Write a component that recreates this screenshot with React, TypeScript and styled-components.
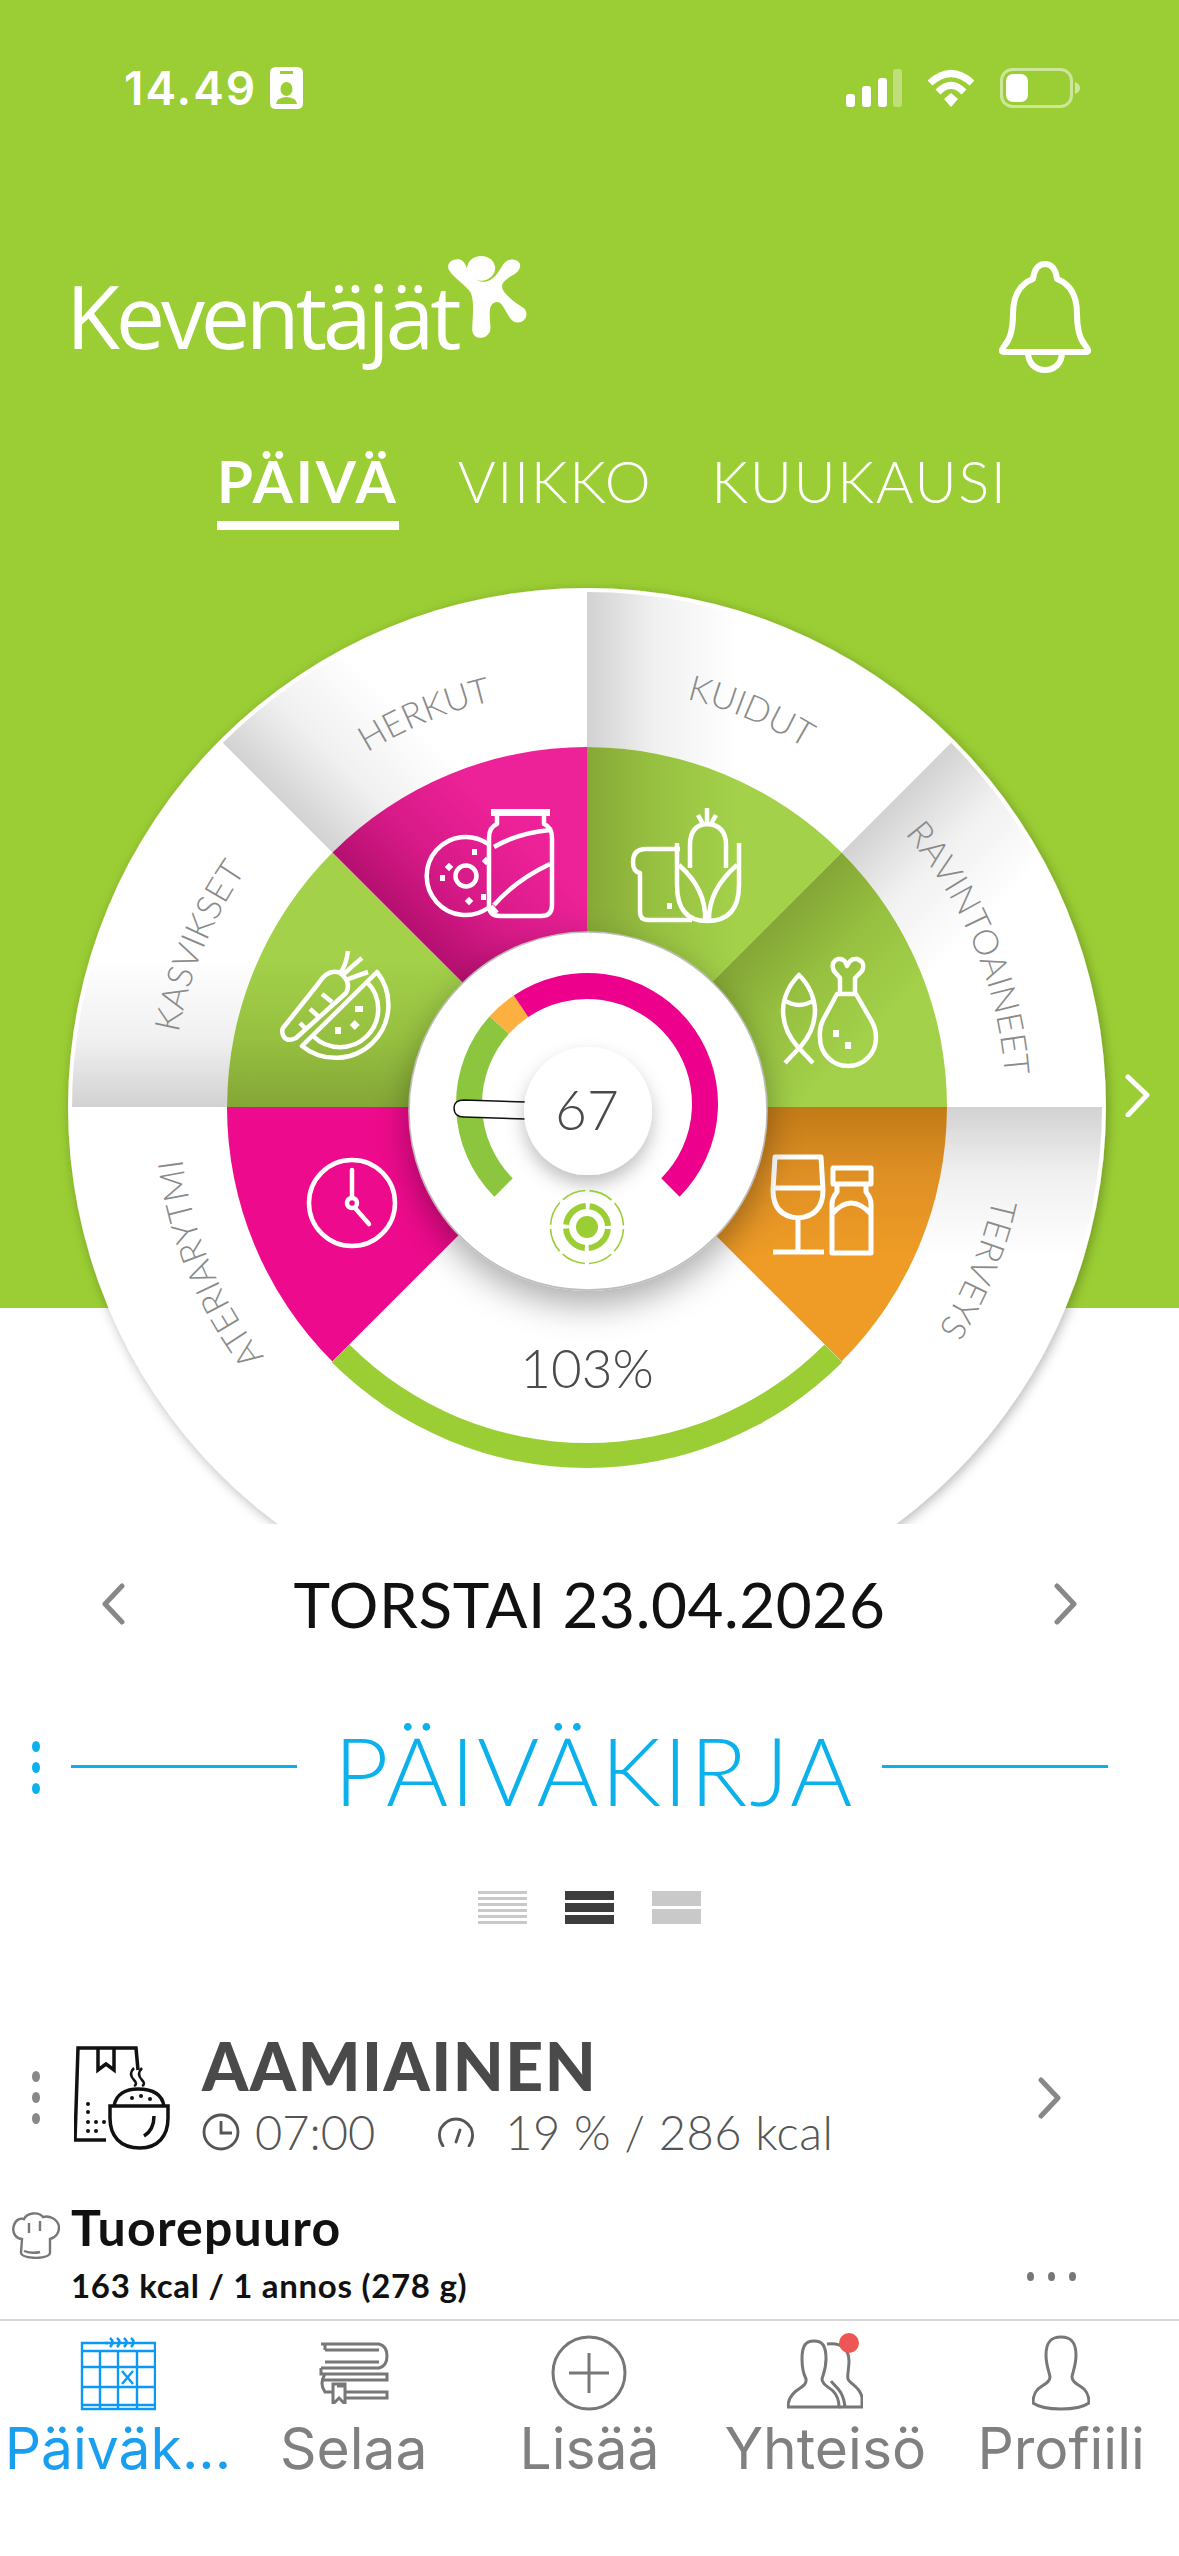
import React from "react";
import styled, { createGlobalStyle } from "styled-components";

const Global = createGlobalStyle`
  html, body { margin: 0; padding: 0; background: #fff; }
  * { box-sizing: border-box; }
  #root { width: 1179px; height: 2556px; }
`;

const GREEN = "#9bce34";
const BLUE = "#0cb1ec";
const CX = 587;
const CY = 1107;

const Page = styled.div`
  width: 1179px; height: 2556px; display: flex; flex-direction: column; overflow: hidden;
  background: #fff; font-family: Lato, "Open Sans", sans-serif; color: #111;
`;
const Scroll = styled.main`flex: 1; overflow: hidden; min-height: 0;`;
const Hero = styled.section`
  position: relative; height: 1524px; overflow: hidden;
  background: linear-gradient(${GREEN} 0 1308px, #fff 1308px);
`;
const StatusBar = styled.div`
  height: 176px; display: flex; align-items: center; justify-content: space-between; padding: 0 99px 0 124px; color: #fff;
`;
const StatusGroup = styled.div<{ $gap: number }>`display: flex; align-items: center; gap: ${(p) => p.$gap}px;`;
const Clock = styled.span`font: 600 46px Inter, sans-serif; letter-spacing: 2px;`;
const Header = styled.header`
  margin-top: 80px; height: 120px; display: flex; align-items: flex-start; justify-content: space-between; padding: 0 87px 0 66px;
`;
const Logo = styled.div`display: flex; align-items: flex-start; color: #fff;`;
const LogoText = styled.span`font: 400 88px/1 "Open Sans", sans-serif; letter-spacing: -4.2px; margin-top: 15px;`;
const LogoMark = styled.svg`margin: 0 0 0 -9px;`;
const Bell = styled.svg`margin-top: 4px;`;
const Tabs = styled.nav`margin-top: 70px; display: flex; padding-left: 217px; gap: 59px;`;
const Tab = styled.span<{ $active?: boolean }>`
  font-size: 58px; line-height: 70px; color: #fff; font-weight: ${(p) => (p.$active ? 700 : 300)};
  letter-spacing: ${(p) => (p.$active ? 2.8 : 1.6)}px;
  padding-bottom: 5px; border-bottom: 9px solid ${(p) => (p.$active ? "#fff" : "transparent")};
`;
const WheelSvg = styled.svg`display: block; margin-top: 10px;`;
const NextWheel = styled.svg`position: absolute; left: 1124px; top: 1073px;`;
const DateRow = styled.div`height: 160px; display: flex; align-items: center; justify-content: space-between; padding: 0 100px;`;
const DateText = styled.span`font-size: 62px; font-weight: 400; color: #111; letter-spacing: 0.6px;`;
const TitleRow = styled.div`height: 170px; display: flex; align-items: center; padding: 0 71px 0 32px;`;
const Dots = styled.div<{ $color: string; $gap: number; $lift?: number }>`
  display: flex; flex-direction: column; gap: ${(p) => p.$gap}px; width: 8px; margin-bottom: ${(p) => p.$lift ?? 0}px;
  span { display: block; width: 8px; height: 11px; border-radius: 50%; background: ${(p) => p.$color}; }
`;
const DotGap = styled.div`width: 31px;`;
const Rule = styled.div`flex: 1; height: 3px; background: ${BLUE}; margin-bottom: 6px;`;
const Title = styled.h1`margin: 0 28px 0 37px; font-size: 95px; font-weight: 300; color: ${BLUE}; line-height: 110px; letter-spacing: 2px;`;
const Views = styled.div`margin-top: 37px; height: 33px; display: flex; justify-content: center; gap: 38px;`;
const ViewIcon = styled.div<{ $color: string; $h: number }>`
  width: 49px; height: 33px; display: flex; flex-direction: column; justify-content: space-between;
  span { display: block; height: ${(p) => p.$h}px; background: ${(p) => p.$color}; }
`;
const Meal = styled.div`margin-top: 108px; height: 131px; display: flex; padding: 0 116px 0 32px; align-items: center;`;
const MealIcon = styled.svg`margin: 0 0 0 34px;`;
const MealBody = styled.div`margin-left: 32px; flex: 1;`;
const MealTitle = styled.div`font-size: 66px; font-weight: 900; line-height: 64px; color: #4a4a4a; letter-spacing: 1.5px;`;
const MealSub = styled.div`margin-top: 4px; height: 60px; display: flex; align-items: center; font-size: 47px; font-weight: 300; color: #555;`;
const SubIcon = styled.svg<{ $l?: number }>`margin: 0 15px 0 ${(p) => p.$l ?? 0}px;`;
const SubValue = styled.span`margin-left: 15px; letter-spacing: 0.5px;`;
const Food = styled.div`margin-top: 34px; display: flex; padding: 0 103px 0 12px;`;
const ChefHat = styled.svg`margin-top: 14px; flex: none;`;
const FoodBody = styled.div`margin-left: 11px; flex: 1;`;
const FoodName = styled.div`font-size: 50px; font-weight: 700; line-height: 60px; color: #111; letter-spacing: 1.2px;`;
const FoodInfo = styled.div`margin-top: 8px; font-size: 33px; font-weight: 700; line-height: 40px; color: #111; letter-spacing: 0.7px;`;
const More = styled.div`
  align-self: flex-end; display: flex; gap: 14px; margin-bottom: 24px;
  span { display: block; width: 7px; height: 9px; border-radius: 50%; background: #777; }
`;
const TabBar = styled.footer`
  height: 237px; border-top: 2px solid #d6d6d6; display: grid; grid-template-columns: repeat(5, 1fr); padding-top: 12px; flex: none;
`;
const BarItem = styled.div<{ $active?: boolean }>`
  display: flex; flex-direction: column; align-items: center; color: ${(p) => (p.$active ? "#1a9ff0" : "#808080")};
`;
const BarIcon = styled.div`height: 80px; display: flex; align-items: center; justify-content: center; position: relative;`;
const BarLabel = styled.span`font: 400 57px/70px Inter, sans-serif; margin-top: 1px; white-space: nowrap;`;
const RedDot = styled.span`
  position: absolute; top: 0; right: 4px; width: 20px; height: 20px; border-radius: 50%; background: #ee5555;
`;

const pt = (r: number, a: number, cx = CX, cy = CY) => {
  const t = (a * Math.PI) / 180;
  return [cx + r * Math.sin(t), cy - r * Math.cos(t)];
};
const sector = (r0: number, r1: number, a0: number, a1: number) => {
  const [x0, y0] = pt(r1, a0);
  const [x1, y1] = pt(r1, a1);
  const [x2, y2] = pt(r0, a1);
  const [x3, y3] = pt(r0, a0);
  return `M${x0} ${y0}A${r1} ${r1} 0 0 1 ${x1} ${y1}L${x2} ${y2}A${r0} ${r0} 0 0 0 ${x3} ${y3}Z`;
};
const arc = (r: number, a0: number, a1: number, cx: number, cy: number) => {
  const [x0, y0] = pt(r, a0, cx, cy);
  const [x1, y1] = pt(r, a1, cx, cy);
  return `M${x0} ${y0}A${r} ${r} 0 ${a1 - a0 > 180 ? 1 : 0} 1 ${x1} ${y1}`;
};

type Seg = { id: string; a: number; label: string; r: number; dark: string; mid: string; light: string };
const segs: Seg[] = [
  { id: "kasvikset", a: 270, label: "KASVIKSET", r: 415, dark: "#84a636", mid: "#96c040", light: "#a3d14a" },
  { id: "herkut", a: 315, label: "HERKUT", r: 417, dark: "#b50f70", mid: "#d81a88", light: "#ee2298" },
  { id: "kuidut", a: 0, label: "KUIDUT", r: 420, dark: "#86a836", mid: "#97c141", light: "#a3d14a" },
  { id: "ravinto", a: 45, label: "RAVINTOAINEET", r: 419, dark: "#84a636", mid: "#96c040", light: "#a3d14a" },
  { id: "terveys", a: 90, label: "TERVEYS", r: 416, dark: "#c27a17", mid: "#df9024", light: "#ef9c26" },
];

const SegGrad = ({ s }: { s: Seg }) => {
  const t = (s.a * Math.PI) / 180;
  const x2 = CX + 150 * Math.cos(t);
  const y2 = CY + 150 * Math.sin(t);
  return (
    <>
      <linearGradient id={`o-${s.id}`} gradientUnits="userSpaceOnUse" x1={CX} y1={CY} x2={x2} y2={y2}>
        <stop offset="0" stopColor="#d2d2d2" />
        <stop offset="0.45" stopColor="#f0f0f0" />
        <stop offset="1" stopColor="#ffffff" />
      </linearGradient>
      <linearGradient id={`i-${s.id}`} gradientUnits="userSpaceOnUse" x1={CX} y1={CY} x2={x2} y2={y2}>
        <stop offset="0" stopColor={s.dark} />
        <stop offset="0.45" stopColor={s.mid} />
        <stop offset="1" stopColor={s.light} />
      </linearGradient>
    </>
  );
};

const labelPaths = [...segs.map((s) => ({ id: s.id, a: s.a, r: s.r, label: s.label })), { id: "ateria", a: 225, r: 408, label: "ATERIARYTMI" }];

const Wheel = () => (
  <WheelSvg width={1179} height={984} viewBox="0 540 1179 984" role="img">
    <defs>
      {segs.map((s) => <SegGrad key={s.id} s={s} />)}
      <filter id="disk" x="-10%" y="-10%" width="120%" height="120%">
        <feDropShadow dx="2" dy="3" stdDeviation="6" floodColor="#000" floodOpacity="0.28" />
      </filter>
      <filter id="hub" x="-30%" y="-30%" width="160%" height="170%">
        <feDropShadow dx="0" dy="14" stdDeviation="17" floodColor="#000" floodOpacity="0.33" />
      </filter>
      <filter id="num" x="-30%" y="-30%" width="160%" height="170%">
        <feDropShadow dx="0" dy="9" stdDeviation="9" floodColor="#000" floodOpacity="0.25" />
      </filter>
      {labelPaths.map((s) => {
        const [x0, y0] = pt(s.r, s.a - 5);
        const [x1, y1] = pt(s.r, s.a + 50);
        return <path key={s.id} id={`t-${s.id}`} d={`M${x0} ${y0}A${s.r} ${s.r} 0 0 1 ${x1} ${y1}`} />;
      })}
    </defs>

    <circle cx={CX} cy={CY} r={519} fill="#fff" filter="url(#disk)" />
    {segs.map((s) => <path key={s.id} d={sector(360, 515, s.a, s.a + 45)} fill={`url(#o-${s.id})`} />)}
    <path d={sector(360, 515, 225, 270)} fill="#fff" />

    {segs.map((s) => <path key={s.id} d={sector(0, 360, s.a, s.a + 45)} fill={`url(#i-${s.id})`} />)}
    <path d={sector(0, 360, 225, 270)} fill="#ee0a8c" />
    <path d={sector(0, 361, 135, 225)} fill="#fff" />
    <path d={sector(336, 361, 135, 225)} fill={GREEN} />

    <g fill="#8a8a8a" fontSize="35" fontFamily="Lato, sans-serif" fontWeight="300" textAnchor="middle">
      {labelPaths.map((s) => (
        <text key={s.id}><textPath href={`#t-${s.id}`} startOffset="50%">{s.label}</textPath></text>
      ))}
    </g>
    <text x={587} y={1388} textAnchor="middle" fontSize="53" fontFamily="Lato, sans-serif" fontWeight="300" fill="#4a4a4a">103%</text>

    <g fill="none" stroke="#fff" strokeWidth={4.5} strokeLinejoin="round" strokeLinecap="butt">
      {/* donut + jar */}
      <path d="M488 844A39 39 0 1 0 488 908" />
      <circle cx={466} cy={876} r={10.5} />
      <g fill="#fff" stroke="none">
        <rect x={472} y={849} width={5} height={6} />
        <rect x={446} y={864} width={6} height={6} transform="rotate(45 449 867)" />
        <rect x={440} y={875} width={5} height={6} />
        <rect x={466} y={898} width={6} height={6} transform="rotate(45 469 901)" />
        <rect x={481} y={894} width={5} height={6} />
        <rect x={483} y={858} width={6} height={6} transform="rotate(45 486 861)" />
        <rect x={491} y={809} width={59} height={7} />
      </g>
      <path d="M497 816V824Q489 827 489 838V905Q489 916 500 916H541Q552 916 552 905V838Q552 827 544 824V816" />
      <path d="M494 847Q518 833 550 830M494 905Q516 880 550 864M491 906L497 913" />
      {/* carrot + melon */}
      <path d="M283 1028L318 984Q328 968 340 973Q352 982 346 993L296 1038Q288 1042 284 1037Q281 1032 283 1028Z" />
      <path d="M340 973Q346 966 348 951M343 975Q352 966 362 958M346 980Q356 976 368 972M322 994L332 1002M310 1009L318 1016M300 1023L306 1029" />
      <path d="M302 1046L377 972A53 53 0 0 1 302 1046Z" />
      <path d="M367 982A38 38 0 0 1 313 1036" />
      <g fill="#fff" stroke="none">
        <rect x={355} y={1006} width={8} height={6} />
        <rect x={335} y={1027} width={6} height={7} />
        <rect x={351} y={1021} width={7} height={7} transform="rotate(45 354 1025)" />
      </g>
      {/* bread + corn */}
      <path d="M680 849H646Q633 849 633 862Q633 872 640 873V912Q640 920 648 920H692" />
      <path d="M677 843V885Q677 921 707 921Q739 921 739 885V843M690 868V845Q690 825 707 824Q726 825 726 845V868" />
      <path d="M679 865Q707 890 705 921M737 865Q708 890 709 921M707 808V824M698 815L703 824M716 815L711 824" />
      <rect x={667} y={903} width={5} height={6} fill="#fff" stroke="none" />
      {/* fish + leg */}
      <path d="M813 1063L797 1046Q783 1030 783 1010Q784 990 799 975Q814 990 815 1010Q815 1030 801 1046L785 1063M784 1000Q799 1010 814 1000" />
      <path d="M837 994L823 1020Q819 1028 820 1038A28 28 0 0 0 876 1038Q876 1028 871 1020L856 994ZM840 994V978L834 971Q830 962 838 959Q845 958 847 966Q850 958 857 959Q866 962 862 971L855 978V994" />
      <g fill="#fff" stroke="none">
        <rect x={833} y={1030} width={6} height={7} />
        <rect x={845} y={1042} width={6} height={7} />
      </g>
      {/* clock */}
      <circle cx={352} cy={1203} r={43} />
      <path d="M352 1170V1198M355 1208L369 1224" strokeLinecap="round" />
      <circle cx={352} cy={1203} r={5} />
      {/* wine + bottle */}
      <path d="M775 1157H821L823 1190Q823 1216 798 1218Q773 1216 773 1190ZM798 1218V1252M773 1252H824" strokeWidth={5} />
      <path d="M774 1188H822" strokeWidth={5} />
      <path d="M833 1168H871V1184H833ZM837 1184V1192Q832 1198 832 1204V1253H871V1204Q871 1198 866 1192V1184M832 1214Q851 1192 871 1214" strokeWidth={5} />
    </g>

    <circle cx={588} cy={1111} r={179} fill="#fff" stroke="#bdbdbd" strokeWidth={1.5} filter="url(#hub)" />
    <g fill="none" strokeWidth={26}>
      <path d={arc(118, 225, 312, 587, 1104)} stroke="#8cc63f" />
      <path d={arc(118, 312, 326, 587, 1104)} stroke="#fbb040" />
      <path d={arc(118, 326, 495, 587, 1104)} stroke="#ec008c" />
    </g>
    <path d="M526 1102L464 1100Q454 1100 454 1108Q454 1117 464 1117L526 1119" fill="#fff" stroke="#111" strokeWidth={1.5} />
    <circle cx={588} cy={1111} r={64} fill="#fff" filter="url(#num)" />
    <text x={587} y={1130} textAnchor="middle" fontSize="55" fontFamily="Lato, sans-serif" fontWeight="300" fill="#4a4a4a">67</text>
    <g fill="none" stroke={GREEN}>
      <circle cx={587} cy={1227} r={11} fill={GREEN} stroke="none" />
      <circle cx={587} cy={1227} r={21} strokeWidth={6} strokeDasharray="29 4" strokeDashoffset={-2} />
      <circle cx={587} cy={1227} r={36.5} strokeWidth={1.6} strokeDasharray="24.5 4.2" strokeDashoffset={-2} />
    </g>
  </WheelSvg>
);

const Chevron = ({ left, color = "#888", h = 42 }: { left?: boolean; color?: string; h?: number }) => (
  <svg width={26} height={h} viewBox="0 0 26 42" fill="none">
    <path d={left ? "M22 3L5 21L22 39" : "M4 3L21 21L4 39"} stroke={color} strokeWidth={5} strokeLinecap="round" strokeLinejoin="round" />
  </svg>
);

export default function App() {
  return (
    <Page>
      <Global />
      <Scroll>
        <Hero>
          <StatusBar>
            <StatusGroup $gap={13}>
              <Clock>14.49</Clock>
              <svg width={33} height={42} viewBox="0 0 33 42">
                <path fillRule="evenodd" fill="#fff" d="M6 0H27Q33 0 33 6V36Q33 42 27 42H6Q0 42 0 36V6Q0 0 6 0ZM10 4V7H23V4ZM16.5 15A6 7 0 1 0 16.5 29A6 7 0 1 0 16.5 15ZM6 37H27Q27 31 16.5 30Q6 31 6 37Z" />
              </svg>
            </StatusGroup>
            <StatusGroup $gap={24}>
              <svg width={56} height={38} viewBox="0 0 56 38" fill="#fff">
                <rect x={0} y={25} width={9} height={13} rx={3} />
                <rect x={16} y={17} width={9} height={21} rx={3} />
                <rect x={32} y={9} width={9} height={29} rx={3} />
                <rect x={47} y={0} width={9} height={38} rx={3} opacity={0.35} />
              </svg>
              <svg width={50} height={38} viewBox="0 0 50 38" fill="none" stroke="#fff" strokeWidth={7}>
                <path d="M4 14Q25 -5 46 14M12 23Q25 10 38 23" />
                <path d="M18 30L25 24L32 30L25 38Z" fill="#fff" stroke="none" />
              </svg>
              <svg width={80} height={40} viewBox="0 0 80 40" fill="none">
                <rect x={1.5} y={1.5} width={70} height={37} rx={11} stroke="#fff" strokeOpacity={0.5} strokeWidth={3} />
                <rect x={6} y={6} width={22} height={28} rx={7} fill="#fff" />
                <path d="M75 14Q80 16 80 20Q80 24 75 26Z" fill="#fff" opacity={0.5} />
              </svg>
            </StatusGroup>
          </StatusBar>
          <Header>
            <Logo>
              <LogoText>Keventäjät</LogoText>
              <LogoMark width={79} height={82} viewBox="2 3 62 73" preserveAspectRatio="none">
                <circle cx={28} cy={14} r={11} fill="#fff" />
                <path fill="#fff" d="M3 16C0 10 5 5 11 6C16 8 16 13 18 17C21 24 27 26 31 26C38 25 41 18 45 11C48 5 55 5 58 9C60 13 57 18 53 20C47 24 43 27 45 33C50 42 58 46 62 50C66 55 62 64 55 62C50 60 48 52 44 46C41 42 36 44 35 50C34 58 36 65 35 70C32 78 22 78 21 69C21 60 23 45 20 36C16 29 7 23 3 16Z" />
              </LogoMark>
            </Logo>
            <Bell width={94} height={114} viewBox="0 0 94 114" fill="none" stroke="#fff" strokeWidth={6} strokeLinejoin="round">
              <path d="M47 4C40 4 36 10 35 19C22 24 15 36 15 54C15 68 13 78 7 85C3 90 3 92 6 92H88C91 92 91 90 87 85C81 78 79 68 79 54C79 36 72 24 59 19C58 10 54 4 47 4Z" />
              <path d="M30 92C30 104 38 110 47 110C56 110 64 104 64 92" />
            </Bell>
          </Header>
          <Tabs>
            <Tab $active>PÄIVÄ</Tab>
            <Tab>VIIKKO</Tab>
            <Tab>KUUKAUSI</Tab>
          </Tabs>
          <Wheel />
          <NextWheel width={28} height={44} viewBox="0 0 28 44" fill="none">
            <path d="M4 4L23 22L4 42" stroke="#fff" strokeWidth={5} strokeLinecap="round" strokeLinejoin="round" />
          </NextWheel>
        </Hero>

        <DateRow>
          <Chevron left />
          <DateText>TORSTAI 23.04.2026</DateText>
          <Chevron />
        </DateRow>
        <TitleRow>
          <Dots $color={BLUE} $gap={10} $lift={3}><span /><span /><span /></Dots>
          <DotGap />
          <Rule />
          <Title>PÄIVÄKIRJA</Title>
          <Rule />
        </TitleRow>
        <Views>
          <ViewIcon $color="#c9c9c9" $h={3}><span /><span /><span /><span /><span /><span /></ViewIcon>
          <ViewIcon $color="#3d3d3d" $h={9}><span /><span /><span /></ViewIcon>
          <ViewIcon $color="#c9c9c9" $h={15}><span /><span /></ViewIcon>
        </Views>
        <Meal>
          <Dots $color="#888" $gap={10}><span /><span /><span /></Dots>
          <MealIcon width={96} height={104} viewBox="0 0 96 104" fill="none" stroke="#111" strokeWidth={3.5}>
            <path d="M32 94H1L4 2H62L64 24M24 2V24L32 18L40 24V2" />
            <path d="M60 22Q54 28 60 34Q64 38 60 40M68 22Q62 28 68 34Q72 38 68 40" strokeWidth={2.5} />
            <path d="M36 60H94V72C94 90 84 102 66 102C46 102 36 90 36 72ZM40 60C42 48 52 43 64 43C78 43 88 48 90 60M80 70Q80 84 70 90" />
            <g fill="#111" stroke="none">
              <circle cx={14} cy={66} r={2} /><circle cx={14} cy={76} r={2} /><circle cx={22} cy={76} r={2} />
              <circle cx={30} cy={76} r={2} /><circle cx={14} cy={85} r={2} /><circle cx={22} cy={85} r={2} />
              <circle cx={14} cy={58} r={2} /><circle cx={58} cy={52} r={2} /><circle cx={67} cy={50} r={2} /><circle cx={76} cy={53} r={2} />
            </g>
          </MealIcon>
          <MealBody>
            <MealTitle>AAMIAINEN</MealTitle>
            <MealSub>
              <SubIcon width={38} height={38} viewBox="0 0 38 38" fill="none" stroke="#555" strokeWidth={2.8}>
                <circle cx={19} cy={19} r={17} /><path d="M19 8V20H30" />
              </SubIcon>
              07:00
              <SubIcon $l={62} width={38} height={30} viewBox="0 0 38 30" fill="none" stroke="#555" strokeWidth={2.8} strokeLinecap="round">
                <path d="M6 29Q0 20 4 11Q10 2 19 2Q28 2 34 11Q38 20 32 29M19 25L23 13" />
              </SubIcon>
              <SubValue>19 % / 286 kcal</SubValue>
            </MealSub>
          </MealBody>
          <Chevron />
        </Meal>
        <Food>
          <ChefHat width={48} height={48} viewBox="0 0 48 48" fill="none" stroke="#777" strokeWidth={2.4}>
            <path d="M10 28C2 27 0 20 2 14C4 8 9 7 12 8C15 2 26 0 31 6C37 4 46 8 47 16C47 24 42 27 38 28V42Q38 46 24 47Q9 46 9 42ZM17 12V22M28 10V20" />
            <path d="M12 40Q20 43 28 41" />
          </ChefHat>
          <FoodBody>
            <FoodName>Tuorepuuro</FoodName>
            <FoodInfo>163 kcal / 1 annos (278 g)</FoodInfo>
          </FoodBody>
          <More><span /><span /><span /></More>
        </Food>
      </Scroll>
      <TabBar>
        <BarItem $active>
          <BarIcon>
            <svg width={76} height={76} viewBox="0 0 76 76" fill="none" stroke="#0a99f5" strokeWidth={2.4}>
              <path d="M2 8H75V74H2ZM2 16H75M2 32H75M2 52H75M2 70H75M20 16V74M38 16V74M57 16V74" />
              <path d="M25 8H28M30 3Q35 7 30 12M37 3Q42 7 37 12M44 3Q49 7 44 12M51 3Q56 7 51 12" strokeWidth={2.6} />
              <path d="M42 36L53 49M53 36L42 49" />
            </svg>
          </BarIcon>
          <BarLabel>Päiväk...</BarLabel>
        </BarItem>
        <BarItem>
          <BarIcon>
            <svg width={70} height={62} viewBox="0 0 70 62" fill="none" stroke="#777" strokeWidth={3}>
              <path d="M2 2H60Q68 4 68 14Q68 24 60 26H2M6 8H60M6 20H60M6 8V2M2 26V32H68V38H2M6 32Q0 42 6 50H14M26 50H68V56H26M6 38H60M18 44H26M14 42H26V62L20 56L14 62Z" />
            </svg>
          </BarIcon>
          <BarLabel>Selaa</BarLabel>
        </BarItem>
        <BarItem>
          <BarIcon>
            <svg width={76} height={76} viewBox="0 0 76 76" fill="none" stroke="#777" strokeWidth={3}>
              <circle cx={38} cy={38} r={36} />
              <path d="M38 18V58M18 38H58" />
            </svg>
          </BarIcon>
          <BarLabel>Lisää</BarLabel>
        </BarItem>
        <BarItem>
          <BarIcon>
            <svg width={76} height={72} viewBox="0 0 76 72" fill="none" stroke="#777" strokeWidth={3}>
              <path d="M15 22C15 8 19 4 27 4C35 4 39 8 39 22C39 32 36 38 35 42C35 48 42 50 46 54C50 58 52 64 52 70H1C1 62 4 58 9 54C14 50 20 48 19 42C17 38 15 32 15 22Z" />
              <path d="M40 7C54 5 62 12 62 24C62 32 60 38 61 42C63 47 73 50 75 60V70H52M44 44C48 50 56 52 58 70" />
            </svg>
            <RedDot />
          </BarIcon>
          <BarLabel>Yhteisö</BarLabel>
        </BarItem>
        <BarItem>
          <BarIcon>
            <svg width={58} height={76} viewBox="0 0 58 76" fill="none" stroke="#777" strokeWidth={3}>
              <path d="M14 20C14 6 20 2 29 2C38 2 44 6 44 20C44 30 41 36 40 42C40 48 48 50 52 54C56 58 57 62 57 68C50 73 40 74 29 74C18 74 8 73 1 68C1 62 2 58 6 54C10 50 18 48 18 42C17 36 14 30 14 20Z" />
            </svg>
          </BarIcon>
          <BarLabel>Profiili</BarLabel>
        </BarItem>
      </TabBar>
    </Page>
  );
}
